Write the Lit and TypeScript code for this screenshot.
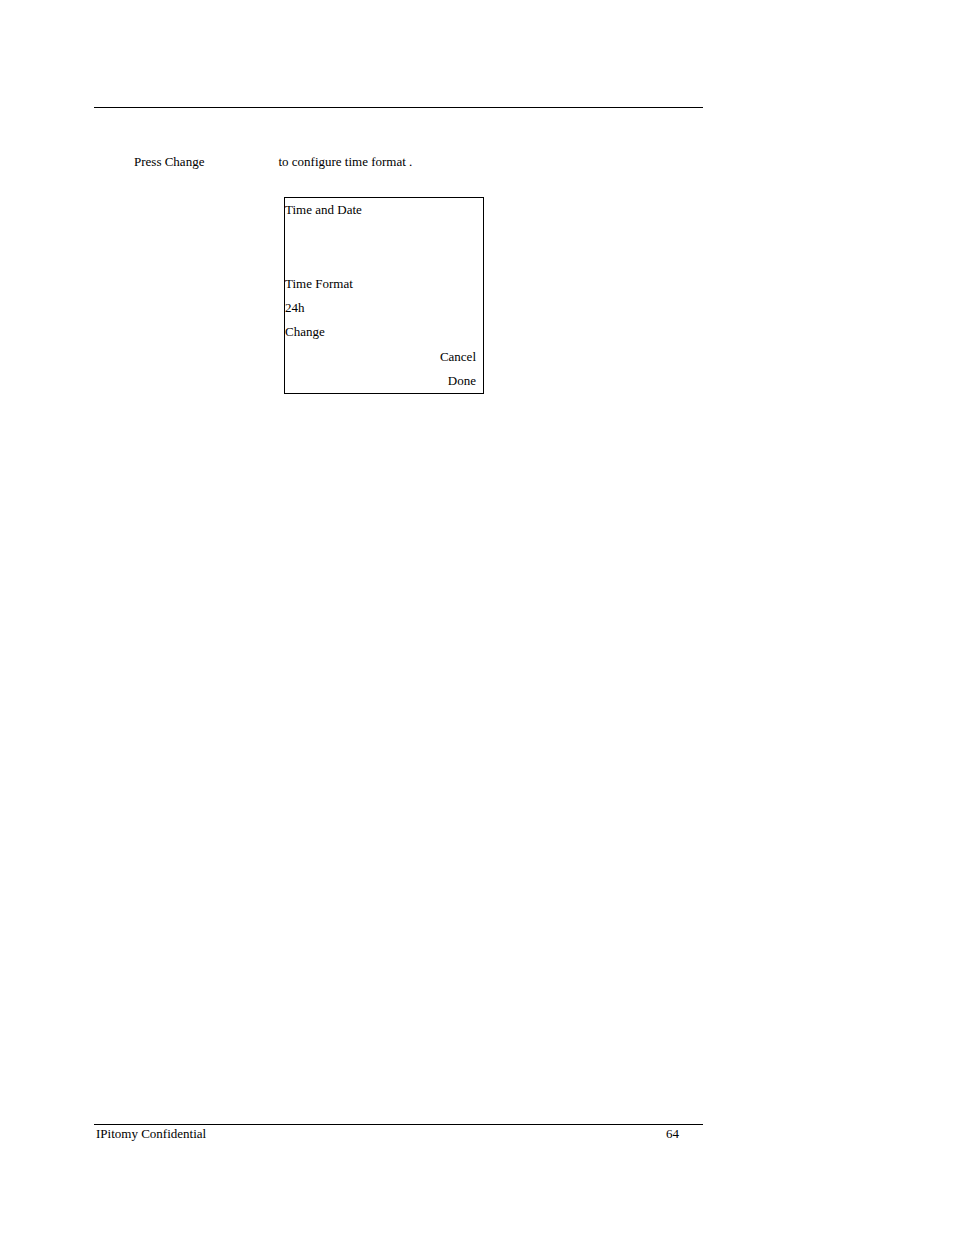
import { LitElement, html, css } from "lit";
import { customElement } from "lit/decorators.js";

@customElement("app-root")
export class AppRoot extends LitElement {
  static styles = css`
    :host {
      display: flex;
      flex-direction: column;
      box-sizing: border-box;
      min-height: 100vh;
      padding: 107px 251px 93px 94px;
      background: #fff;
      color: #000;
      font: 13px/24px "Liberation Serif", "Times New Roman", serif;
    }
    main {
      flex: 1;
      border-top: 1px solid #000;
      padding-top: 42px;
    }
    .step {
      display: flex;
      gap: 74px;
      margin: 0 0 23px;
      padding-left: 40px;
    }
    .screen {
      box-sizing: border-box;
      width: 200px;
      margin-left: 190px;
      border: 1px solid #000;
    }
    .screen p {
      margin: 0;
    }
    .setting {
      padding-top: 50px;
    }
    button {
      display: block;
      margin: 0;
      padding: 0;
      border: 0;
      background: none;
      color: inherit;
      font: inherit;
      cursor: pointer;
    }
    .actions {
      display: flex;
      flex-direction: column;
      align-items: flex-end;
      padding: 1px 7px 0 0;
    }
    footer {
      display: flex;
      justify-content: space-between;
      border-top: 1px solid #000;
      padding: 0 24px 0 2px;
      line-height: 17px;
    }
  `;

  render() {
    return html`
      <main>
        <p class="step"><span>Press Change</span><span>to configure time format .</span></p>
        <section class="screen" aria-label="Time and Date">
          <p>Time and Date</p>
          <div class="setting">
            <p>Time Format</p>
            <p>24h</p>
            <button type="button">Change</button>
          </div>
          <div class="actions">
            <button type="button">Cancel</button>
            <button type="button">Done</button>
          </div>
        </section>
      </main>
      <footer><span>IPitomy Confidential</span><span>64</span></footer>
    `;
  }
}
